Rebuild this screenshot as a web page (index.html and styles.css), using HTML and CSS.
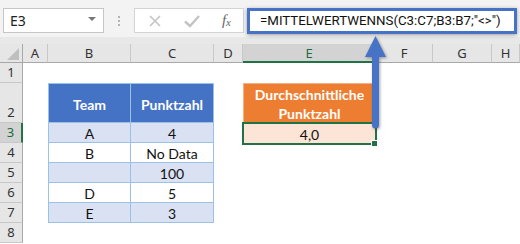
FILE: index.html
```html
<!DOCTYPE html>
<html>
  <head>
    <meta charset='UTF-8'>
    <title>MITTELWERTWENNS</title>
    <link rel="stylesheet" href="styles.css">
  </head>
  <body>
    <div class='app'>
      <div class='toolbar'>
        <div class='namebox'>
          <span class='namebox__ref'>E3</span>
          <span class='namebox__caret'></span>
        </div>
        <div class='grip'><i></i><i></i><i></i></div>
        <div class='fxbar'>
          <svg class='fxbar__icon' width='14' height='14' viewBox='0 0 14 14'>
            <path d='M2 2 L12 12 M12 2 L2 12' stroke='#c4c4c4' stroke-width='1.6' fill='none'/>
          </svg>
          <svg class='fxbar__icon' width='18' height='14' viewBox='0 0 18 14'>
            <path d='M2 7.5 L7 12 L16 2' stroke='#c4c4c4' stroke-width='2.4' fill='none'/>
          </svg>
          <span class='fxbar__fx'>f<sub>x</sub></span>
        </div>
        <div class='formula'>=MITTELWERTWENNS(C3:C7;B3:B7;"&lt;&gt;")</div>
      </div>
      <div class='strip'></div>

      <div class='sheet'>
        <!-- column headers -->
        <div class='hd hd--corner'><span class='corner'></span></div>
        <div class='hd'>A</div>
        <div class='hd'>B</div>
        <div class='hd'>C</div>
        <div class='hd'>D</div>
        <div class='hd hd--active'>E</div>
        <div class='hd'>F</div>
        <div class='hd'>G</div>
        <div class='hd'>H</div>

        <!-- row 1 -->
        <div class='rh'>1</div>
        <div class='c'></div><div class='c'></div><div class='c'></div><div class='c'></div>
        <div class='c'></div><div class='c'></div><div class='c'></div><div class='c'></div>

        <!-- row 2 -->
        <div class='rh'>2</div>
        <div class='c'></div>
        <div class='c t t--th t--first'>Team</div>
        <div class='c t t--th'>Punktzahl</div>
        <div class='c'></div>
        <div class='c out out--th'>Durchschnittliche<br>Punktzahl</div>
        <div class='c'></div><div class='c'></div><div class='c'></div>

        <!-- row 3 -->
        <div class='rh rh--active'>3</div>
        <div class='c'></div>
        <div class='c t t--band t--first'>A</div>
        <div class='c t t--band'>4</div>
        <div class='c'></div>
        <div class='c out out--val'>4,0</div>
        <div class='c'></div><div class='c'></div><div class='c'></div>

        <!-- row 4 -->
        <div class='rh'>4</div>
        <div class='c'></div>
        <div class='c t t--first'>B</div>
        <div class='c t'>No Data</div>
        <div class='c'></div><div class='c'></div><div class='c'></div><div class='c'></div><div class='c'></div>

        <!-- row 5 -->
        <div class='rh'>5</div>
        <div class='c'></div>
        <div class='c t t--band t--first'></div>
        <div class='c t t--band'>100</div>
        <div class='c'></div><div class='c'></div><div class='c'></div><div class='c'></div><div class='c'></div>

        <!-- row 6 -->
        <div class='rh'>6</div>
        <div class='c'></div>
        <div class='c t t--first'>D</div>
        <div class='c t'>5</div>
        <div class='c'></div><div class='c'></div><div class='c'></div><div class='c'></div><div class='c'></div>

        <!-- row 7 -->
        <div class='rh'>7</div>
        <div class='c'></div>
        <div class='c t t--band t--first'>E</div>
        <div class='c t t--band'>3</div>
        <div class='c'></div><div class='c'></div><div class='c'></div><div class='c'></div><div class='c'></div>

        <!-- row 8 -->
        <div class='rh'>8</div>
        <div class='c'></div><div class='c'></div><div class='c'></div><div class='c'></div>
        <div class='c'></div><div class='c'></div><div class='c'></div><div class='c'></div>
      </div>

      <svg class='arrow' width='28' height='100' viewBox='0 0 28 100'>
        <path d='M13.5 3 L24 24 L17 24 L17 92 Q17 95.5 13.5 95.5 Q10 95.5 10 92 L10 24 L3 24 Z' fill='#4673c6'/>
      </svg>
    </div>
  </body>
</html>
```

FILE: styles.css
```css
html,
body {
	margin: 0;
}

body {
	width: 520px;
	height: 244px;
	overflow: hidden;
	background: #fff;
	font-family: Lato, 'Liberation Sans', sans-serif;
}

.app {
	position: relative;
}

/* formula bar */

.toolbar {
	display: flex;
	align-items: flex-start;
	height: 37px;
	box-sizing: border-box;
	padding: 8px 0 0 3px;
	background: #f3f3f3;
}

  .namebox {
  	display: flex;
  	align-items: center;
  	justify-content: space-between;
  	width: 101px;
  	height: 25px;
  	box-sizing: border-box;
  	padding: 0 7px 0 6px;
  	background: #fff;
  	border: 1px solid #c6c6c6;
  	font-family: 'Noto Sans', sans-serif;
  	font-size: 14px;
  	color: #222;
  }

  .namebox__caret {
  	width: 0;
  	height: 0;
  	border-left: 4px solid transparent;
  	border-right: 4px solid transparent;
  	border-top: 4px solid #777;
  	margin-top: -3px;
  }

  .grip {
  	display: flex;
  	flex-direction: column;
  	gap: 2px;
  	margin: 8px 0 0 14px;
  }

    .grip i {
    	display: block;
    	width: 2px;
    	height: 2px;
    	background: #b4b4b4;
    }

  .fxbar {
  	display: flex;
  	align-items: center;
  	justify-content: space-between;
  	width: 110px;
  	height: 25px;
  	box-sizing: border-box;
  	margin-left: 14px;
  	padding: 0 12px 0 13px;
  	background: #fff;
  	border: 1px solid #d4d4d4;
  }

    .fxbar__fx {
    	font-family: 'Liberation Serif', serif;
    	font-style: italic;
    	font-size: 15px;
    	color: #666;
    }

    .fxbar__fx sub {
    	font-size: 11px;
    	vertical-align: -1px;
    }

  .formula {
  	width: 270px;
  	height: 26px;
  	box-sizing: border-box;
  	margin-left: 3px;
  	padding: 0 0 0 10px;
  	background: #fff;
  	border: 3px solid #4673c6;
  	box-shadow: 0 1px 4px rgba(0, 0, 0, 0.35);
  	font-family: Roboto, sans-serif;
  	font-size: 13.3px;
  	line-height: 20px;
  	color: #111;
  	white-space: nowrap;
  	overflow: hidden;
  }

.strip {
	height: 7px;
	background: #e8e8e8;
}

/* sheet grid */

.sheet {
	display: grid;
	grid-template-columns: 23px 25px 83px 83px 29px 133px 57px 59px 1fr;
	grid-template-rows: 19px 20px 40px 20px 20px 20px 20px 20px 20px;
	font-size: 14px;
	color: #111;
}

  .hd,
  .rh {
  	display: flex;
  	justify-content: center;
  	box-sizing: border-box;
  	background: #e6e6e6;
  	font-family: 'Noto Sans', sans-serif;
  	font-size: 13px;
  	color: #333;
  }

  .hd {
  	align-items: center;
  	border-right: 1px solid #c8c8c8;
  	border-bottom: 1px solid #a8a8a8;
  }

  .hd--corner {
  	position: relative;
  	border-right-color: #a8a8a8;
  }

    .corner {
    	position: absolute;
    	right: 3px;
    	bottom: 2px;
    	width: 0;
    	height: 0;
    	border-left: 12px solid transparent;
    	border-bottom: 12px solid #bfbfbf;
    }

  .hd--active {
  	background: #d3d3d3;
  	border-bottom: 2px solid #217346;
  	color: #1d6b40;
  }

  .rh {
  	align-items: flex-end;
  	line-height: 19px;
  	border-right: 1px solid #a8a8a8;
  	border-bottom: 1px solid #c8c8c8;
  }

  .rh--active {
  	background: #d3d3d3;
  	border-right: 2px solid #217346;
  	color: #1d6b40;
  }

  .c {
  	display: flex;
  	align-items: center;
  	justify-content: center;
  	box-sizing: border-box;
  }

  /* source table */

  .t {
  	border-right: 1px solid #9bc2e6;
  	border-bottom: 1px solid #9bc2e6;
  	padding-top: 2px;
  }

  .t--first {
  	border-left: 1px solid #9bc2e6;
  }

  .t--th {
  	border-top: 1px solid #9bc2e6;
  	background: #4472c4;
  	color: #fff;
  	font-weight: bold;
  }

  .t--band {
  	background: #d9e1f2;
  }

  /* result */

  .out--th {
  	flex-direction: column;
  	border: 1px solid #f4b183;
  	border-bottom: none;
  	background: #ed7d31;
  	color: #fff;
  	font-weight: bold;
  	line-height: 19px;
  	text-align: center;
  }

  .out--val {
  	position: relative;
  	background: #fce4d6;
  	padding-top: 2px;
  }

    .out--val::after {
    	content: '';
    	position: absolute;
    	top: -1px;
    	left: -1px;
    	right: -1px;
    	bottom: -2px;
    	border: 2px solid #217346;
    }

    .out--val::before {
    	content: '';
    	position: absolute;
    	right: -2px;
    	bottom: -4px;
    	width: 5px;
    	height: 5px;
    	background: #217346;
    	border: 1px solid #fff;
    	z-index: 1;
    }

/* callout arrow */

.arrow {
	position: absolute;
	left: 362px;
	top: 33px;
	filter: drop-shadow(1px 1px 1.5px rgba(0, 0, 0, 0.35));
}
```
